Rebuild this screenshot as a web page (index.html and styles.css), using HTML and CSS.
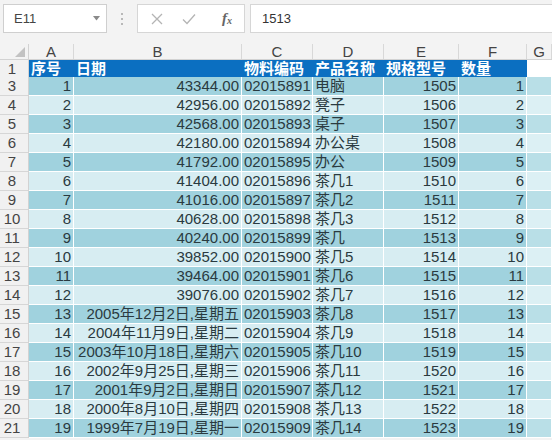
FILE: index.html
```html
<!DOCTYPE html>
<html>
<head>
<meta charset="utf-8">
<link rel="stylesheet" href="styles.css">
</head>
<body>
<div class="toolbar">
  <div class="namebox"><span class="name">E11</span><svg class="dd" width="7" height="5" viewBox="0 0 7 5"><path d="M0 0 H7 L3.5 4.5 Z" fill="#8a8a8a"/></svg></div>
  <div class="dots"><span></span><span></span><span></span></div>
  <div class="btnbox">
    <svg class="ic x" width="14" height="14" viewBox="0 0 14 14"><path d="M2 2 L12 12 M12 2 L2 12" stroke="#b4b4b4" stroke-width="1.3" fill="none"/></svg>
    <svg class="ic ok" width="16" height="14" viewBox="0 0 16 14"><path d="M2 7.5 L6 11.5 L14 2.5" stroke="#b4b4b4" stroke-width="1.3" fill="none"/></svg>
    <span class="fx">f<sub>x</sub></span>
  </div>
  <div class="formula">1513</div>
</div>
<div class="sheet">
  <div class="row colhdr">
    <div class="corner"><svg width="10" height="10" viewBox="0 0 10 10"><path d="M10 0 V10 H0 Z" fill="#c2c2c2"/></svg></div>
    <div class="ch">A</div><div class="ch">B</div><div class="ch">C</div><div class="ch">D</div><div class="ch">E</div><div class="ch">F</div><div class="ch">G</div>
  </div>
  <div class="row head">
    <div class="rh">1</div>
    <div class="hc">序号</div><div class="hc">日期</div><div class="hc">物料编码</div><div class="hc">产品名称</div><div class="hc">规格型号</div><div class="hc">数量</div><div class="hc blank"></div>
  </div>
  <div id="rows"></div>
</div>
<script src="app.js"></script>
</body>
</html>
```
FILE: app.js
```js
var data = [
 [3,1,"43344.00","02015891","电脑",1505,1],
 [4,2,"42956.00","02015892","凳子",1506,2],
 [5,3,"42568.00","02015893","桌子",1507,3],
 [6,4,"42180.00","02015894","办公桌",1508,4],
 [7,5,"41792.00","02015895","办公",1509,5],
 [8,6,"41404.00","02015896","茶几1",1510,6],
 [9,7,"41016.00","02015897","茶几2",1511,7],
 [10,8,"40628.00","02015898","茶几3",1512,8],
 [11,9,"40240.00","02015899","茶几",1513,9],
 [12,10,"39852.00","02015900","茶几5",1514,10],
 [13,11,"39464.00","02015901","茶几6",1515,11],
 [14,12,"39076.00","02015902","茶几7",1516,12],
 [15,13,"2005年12月2日,星期五","02015903","茶几8",1517,13],
 [16,14,"2004年11月9日,星期二","02015904","茶几9",1518,14],
 [17,15,"2003年10月18日,星期六","02015905","茶几10",1519,15],
 [18,16,"2002年9月25日,星期三","02015906","茶几11",1520,16],
 [19,17,"2001年9月2日,星期日","02015907","茶几12",1521,17],
 [20,18,"2000年8月10日,星期四","02015908","茶几13",1522,18],
 [21,19,"1999年7月19日,星期一","02015909","茶几14",1523,19]
];
var html = "";
data.forEach(function (r, i) {
  var band = i % 2 === 0 ? "dark" : "light";
  html += '<div class="row data ' + band + '">' +
    '<div class="rh">' + r[0] + '</div>' +
    '<div class="c num">' + r[1] + '</div>' +
    '<div class="c num">' + r[2] + '</div>' +
    '<div class="c txt">' + r[3] + '</div>' +
    '<div class="c txt">' + r[4] + '</div>' +
    '<div class="c num">' + r[5] + '</div>' +
    '<div class="c num">' + r[6] + '</div>' +
    '<div class="c g"></div>' +
    '</div>';
});
document.getElementById("rows").innerHTML = html;
```
FILE: styles.css
```css
html, body {
  margin: 0;
  padding: 0;
}
body {
  width: 552px;
  height: 440px;
  overflow: hidden;
  background: #f3f3f3;
  font-family: "Liberation Sans", "Noto Sans CJK SC", sans-serif;
  color: #333;
}
.toolbar {
  display: flex;
  align-items: flex-start;
  height: 44px;
  padding-top: 4px;
  box-sizing: border-box;
}
.namebox {
  margin-left: 3px;
  width: 104px;
  height: 29px;
  box-sizing: border-box;
  background: #fff;
  border: 1px solid #cfcfcf;
  display: flex;
  align-items: center;
  justify-content: space-between;
  padding: 0 6px 0 10px;
}
.name {
  font-size: 13px;
  color: #444;
}
.dots {
  width: 30px;
  height: 29px;
  display: flex;
  flex-direction: column;
  align-items: center;
  justify-content: center;
  gap: 3px;
}
.dots span {
  width: 2px;
  height: 2px;
  background: #b8b8b8;
}
.btnbox {
  width: 108px;
  height: 29px;
  box-sizing: border-box;
  background: #fff;
  border: 1px solid #d6d6d6;
  display: flex;
  align-items: center;
  padding: 0 0 0 12px;
}
.ok {
  margin-left: 17px;
}
.fx {
  margin-left: 25px;
  font-family: "Liberation Serif", serif;
  font-style: italic;
  font-size: 15px;
  color: #666;
  font-weight: bold;
}
.fx sub {
  font-size: 10px;
  vertical-align: -1px;
}
.formula {
  margin-left: 5px;
  flex: 1;
  height: 29px;
  box-sizing: border-box;
  background: #fff;
  border: 1px solid #d6d6d6;
  border-right: none;
  font-size: 13px;
  line-height: 27px;
  padding-left: 11px;
  color: #333;
}
.sheet {
  background: #fff;
}
.row {
  display: grid;
  grid-template-columns: 29px 45px 168px 71px 71px 75px 68px 1fr;
}
.colhdr {
  height: 16px;
  background: #f3f3f3;
  border-bottom: 1px solid #d2d2d2;
  box-sizing: border-box;
}
.corner {
  display: flex;
  align-items: flex-end;
  justify-content: flex-end;
  padding: 0 3px 2px 0;
  border-right: 1px solid #d2d2d2;
}
.ch {
  text-align: center;
  font-size: 15px;
  line-height: 15px;
  color: #444;
  border-right: 1px solid #d8d8d8;
}
.rh {
  background: #f1f1f1;
  border-right: 1px solid #d2d2d2;
  border-bottom: 1px solid #d6d6d6;
  text-align: center;
  padding-right: 4px;
  font-size: 15px;
  color: #444;
  box-sizing: border-box;
}
.head {
  height: 17px;
}
.head .rh {
  line-height: 17px;
}
.hc {
  background: #0b6fc1;
  color: #fff;
  font-weight: bold;
  font-size: 15px;
  line-height: 17px;
  padding-left: 2px;
  white-space: nowrap;
  overflow: hidden;
}
.hc.blank {
  background: #fff;
}
.data {
  height: 19px;
}
.data .rh {
  line-height: 18px;
}
.c {
  font-size: 15px;
  line-height: 18px;
  white-space: nowrap;
  overflow: hidden;
  border-right: 1px solid #fff;
  border-bottom: 1px solid #fff;
  color: #2a3a40;
}
.num {
  text-align: right;
  padding-right: 2px;
}
.txt {
  text-align: left;
  padding-left: 2px;
}
.dark .c {
  background: #a0d2de;
}
.light .c {
  background: #d7edf2;
}
.dark .g {
  background: #b9dfe7;
}
.light .g {
  background: #dcf0f4;
}
```
